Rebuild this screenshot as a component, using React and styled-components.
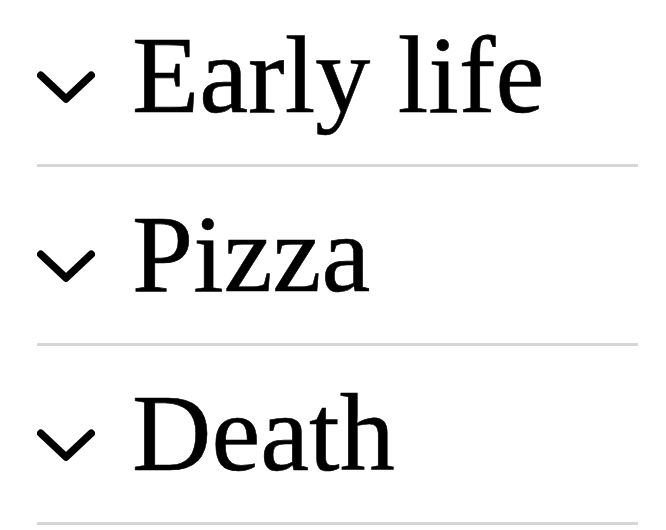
import * as Accordion from '@radix-ui/react-accordion';
import styled, { createGlobalStyle } from 'styled-components';

const GlobalStyle = createGlobalStyle`
	body {
		margin: 0;
		background: #ffffff;
		font-family: 'Liberation Serif', 'Times New Roman', serif;
	}
`;

const sections = [
	{ id: 'early', title: 'Early life' },
	{ id: 'pizza', title: 'Pizza' },
	{ id: 'death', title: 'Death' },
];

const Root = styled(Accordion.Root)`
	display: flex;
	flex-direction: column;
	gap: 12px;
	padding: 0 28px 0 37px;
`;

const Item = styled(Accordion.Item)`
	border-bottom: 3px solid #d6d6d6;
`;

const Header = styled(Accordion.Header)`
	margin: 0;
	font-weight: normal;
`;

const Trigger = styled(Accordion.Trigger)`
	display: flex;
	align-items: center;
	gap: 37px;
	width: 100%;
	height: 164px;
	padding: 20px 0 34px;
	box-sizing: border-box;
	border: 0;
	background: none;
	color: #000;
	font-family: 'Liberation Serif', 'Times New Roman', serif;
	font-size: 110px;
	line-height: 110px;
	text-align: left;
	cursor: pointer;

	&[data-state='open'] svg {
		transform: rotate(180deg);
	}
`;

const Title = styled.span`
	-webkit-text-stroke: 0.6px #000;
`;

const Chevron = styled.svg`
	flex: none;
	margin-top: 24px;
	transition: transform 0.2s;
`;

const ChevronIcon = () => (
	<Chevron width="58" height="32" viewBox="0 0 58 32" fill="none" aria-hidden="true">
		<path
			d="M3.75 4.25 L29 28 L54.25 4.25"
			stroke="#000"
			strokeWidth="7.5"
			strokeLinecap="round"
			strokeLinejoin="round"
		/>
	</Chevron>
);

export default function App() {
	return (
		<>
			<GlobalStyle />
			<Root type="multiple">
				{sections.map(({ id, title }) => (
					<Item key={id} value={id}>
						<Header>
							<Trigger>
								<ChevronIcon />
								<Title>{title}</Title>
							</Trigger>
						</Header>
					</Item>
				))}
			</Root>
		</>
	);
}
